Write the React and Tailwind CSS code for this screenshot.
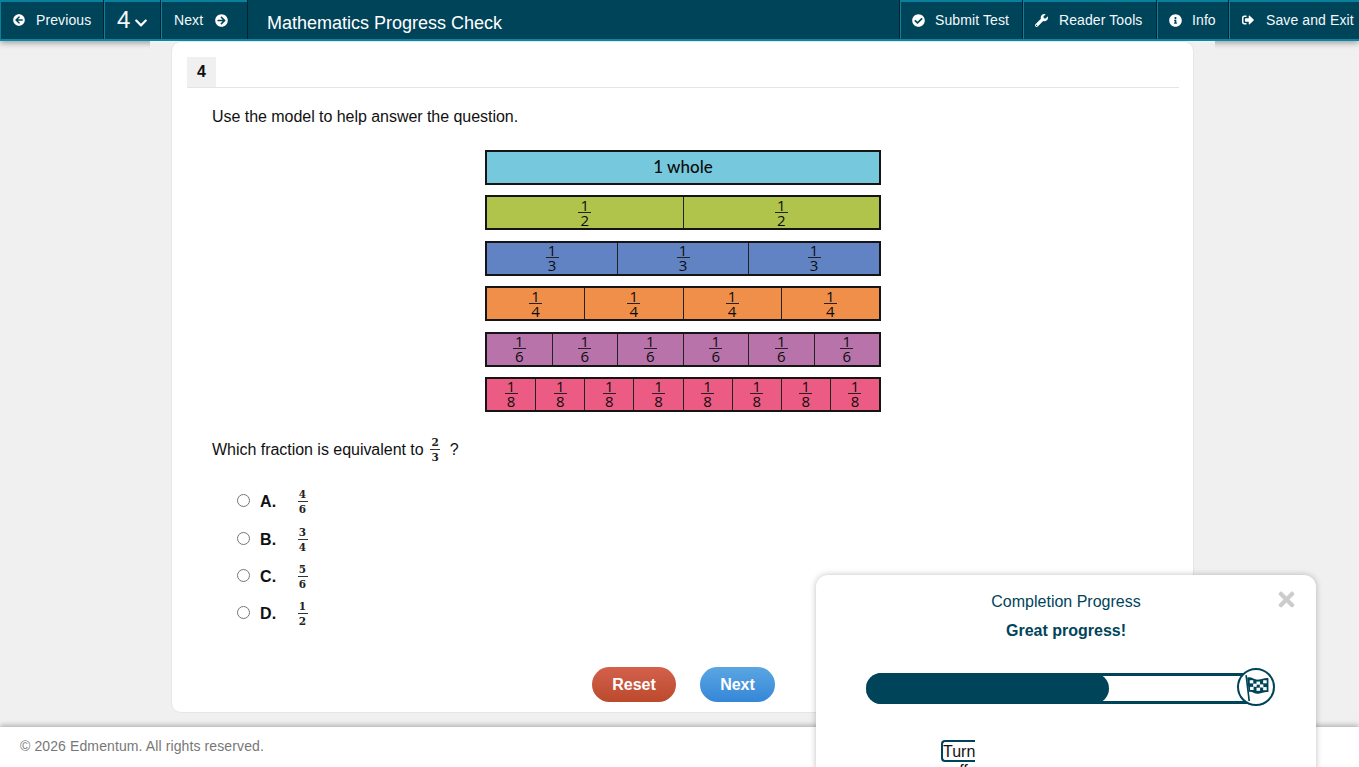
import React from "react";
import {
  FaArrowCircleLeft,
  FaArrowCircleRight,
  FaChevronDown,
  FaCheckCircle,
  FaWrench,
  FaInfoCircle,
  FaSignOutAlt,
  FaTimes,
} from "react-icons/fa";

const rows = [
  { bg: "bg-[#76c8dc]", n: 1, whole: true },
  { bg: "bg-[#b0c44c]", n: 2 },
  { bg: "bg-[#6283c3]", n: 3 },
  { bg: "bg-[#ef8f4a]", n: 4 },
  { bg: "bg-[#b873aa]", n: 6 },
  { bg: "bg-[#ec5b84]", n: 8 },
];

function NavBtn({ icon, children, className = "", after }) {
  return (
    <div
      className={`flex h-full items-center border-l border-[#00242f] pt-px text-[14px] tracking-[0.1px] text-[#f4f8fa] shadow-[inset_1px_0_0_#0a7f9e,inset_0_2px_0_#0a7f9e] ${className}`}
    >
      {icon}
      {children}
      {after}
    </div>
  );
}

function ModelFrac({ n }) {
  return (
    <div className="flex flex-col items-center font-['Open_Sans',sans-serif] text-[15px] font-medium leading-[14px] text-[#0c0c0c]">
      <span className="h-[14px]">1</span>
      <span className="h-px w-[13px] bg-[#222]" />
      <span className="h-[15px]">{n}</span>
    </div>
  );
}

function ModelRow({ bg, n, whole }) {
  return (
    <div className={`flex h-[35px] w-full border-2 border-[#151515] ${bg}`}>
      {whole ? (
        <div className="flex flex-1 items-center justify-center pb-[2px] font-['Lato',sans-serif] text-[17px] font-medium text-[#0c0c0c]">
          1 whole
        </div>
      ) : (
        Array.from({ length: n }).map((_, i) => (
          <div
            key={i}
            className="flex flex-1 items-center justify-center border-l border-[#222] first:border-l-0"
          >
            <ModelFrac n={n} />
          </div>
        ))
      )}
    </div>
  );
}

function MathFrac({ a, b, className = "" }) {
  return (
    <span
      className={`inline-flex flex-col items-center font-['DejaVu_Serif',serif] text-[10.5px] font-bold leading-[12px] text-[#222] ${className}`}
    >
      <span>{a}</span>
      <span className="my-px h-px w-[10px] bg-[#333]" />
      <span>{b}</span>
    </span>
  );
}

function Option({ letter, a, b }) {
  return (
    <div className="flex h-[37.3px] items-center">
      <span className="-mt-[2px] h-[13px] w-[13px] rounded-full border border-[#767676] bg-white" />
      <span className="ml-[10px] mt-px w-[37px] text-[16px] font-bold tracking-[0.2px] text-[#111]">{letter}</span>
      <MathFrac a={a} b={b} className="w-[11px]" />
    </div>
  );
}

function Flag() {
  return (
    <svg viewBox="0 0 26 26" className="h-[27px] w-[27px]" aria-hidden="true">
      <path d="M3 1 L6 26" stroke="#00445a" strokeWidth="1.6" fill="none" />
      <path d="M4 3.5 C8 2 11 6 15 5.4 C18 5 21 3.5 24.5 4 L24.5 17.5 C21 17 18 18.5 15 19 C11 19.8 8.5 16 5.6 17.5 Z" fill="#00445a" />
      <g fill="#ffffff">
        <rect x="6.5" y="6" width="3.4" height="3" />
        <rect x="13" y="7.3" width="3.4" height="3" />
        <rect x="19.4" y="6" width="3.4" height="3" />
        <rect x="9.8" y="9.3" width="3.4" height="3" />
        <rect x="16.2" y="10" width="3.4" height="3" />
        <rect x="6.8" y="12.4" width="3.4" height="3" />
        <rect x="13" y="13.2" width="3.4" height="3" />
        <rect x="19.4" y="12.6" width="3.4" height="3" />
      </g>
    </svg>
  );
}

export default function App() {
  return (
    <div className="relative flex h-[767px] w-[1359px] flex-col overflow-hidden bg-[#f0f0f0] font-['Liberation_Sans',Arial,sans-serif]">
      <header className="flex h-[41px] shrink-0 items-stretch justify-between border-b-2 border-[#0a86a6] bg-[#00445a] shadow-[0_2px_6px_rgba(0,0,0,0.35)]">
        <div className="flex h-full items-center">
          <NavBtn className="w-[103px] border-l-0 pl-[13px]" icon={<FaArrowCircleLeft className="mr-[11px] text-[12px] text-white" />}>
            Previous
          </NavBtn>
          <NavBtn className="w-[57px] pl-[13px]">
            <span className="text-[24px] leading-none">4</span>
            <FaChevronDown className="ml-[4px] mt-[6px] text-[14px] text-white" />
          </NavBtn>
          <NavBtn className="w-[87px] pl-[13px]" after={<FaArrowCircleRight className="ml-[12px] text-[13px] text-white" />}>
            Next
          </NavBtn>
          <div className="flex h-full items-center border-l border-[#00242f] pl-[19px] pt-[8px] text-[18px] text-white">
            Mathematics Progress Check
          </div>
        </div>
        <div className="flex h-full items-center">
          <NavBtn className="w-[123px] pl-[12px]" icon={<FaCheckCircle className="mr-[10px] text-[13px] text-white" />}>
            Submit Test
          </NavBtn>
          <NavBtn className="w-[134px] pl-[12px]" icon={<FaWrench className="mr-[11px] text-[13px] text-white" />}>
            Reader Tools
          </NavBtn>
          <NavBtn className="w-[72px] pl-[12px]" icon={<FaInfoCircle className="mr-[10px] text-[13px] text-white" />}>
            Info
          </NavBtn>
          <NavBtn className="w-[131px] whitespace-nowrap pl-[13px]" icon={<FaSignOutAlt className="mr-[12px] text-[12px] text-white" />}>
            Save and Exit
          </NavBtn>
        </div>
      </header>

      <main className="relative z-10 ml-[150px] h-[686px] w-[1065px] shrink-0 bg-[#f0f0f0] pl-[21px]">
        <section className="h-[672px] w-[1023px] rounded-[10px] border border-[#e6e6e6] bg-white pl-[15px] pr-[14px] pt-[15px]">
          <div className="border-b border-[#e5e5e5]">
            <div className="flex h-[30px] w-[29px] items-center justify-center bg-[#f0f0f0] text-[16px] font-bold text-[#111]">
              4
            </div>
          </div>
          <div className="pl-[25px] text-[16px] text-[#111]">
            <p className="mt-[19px] leading-[20px] tracking-[-0.04px]">Use the model to help answer the question.</p>
            <div className="ml-[273px] mt-[23px] flex w-[396px] flex-col gap-[10.4px]">
              {rows.map((r) => (
                <ModelRow key={r.n} {...r} />
              ))}
            </div>
            <div className="mt-[22px] flex h-[32px] items-center">
              <span className="tracking-[-0.03px]">Which fraction is equivalent to</span>
              <MathFrac a="2" b="3" className="ml-[6px] w-[11px]" />
              <span className="ml-[9px]">?</span>
            </div>
            <div className="ml-[25px] mt-[17.3px] flex flex-col">
              <Option letter="A." a="4" b="6" />
              <Option letter="B." a="3" b="4" />
              <Option letter="C." a="5" b="6" />
              <Option letter="D." a="1" b="2" />
            </div>
            <div className="ml-[380px] mt-[34.7px] flex gap-[24px] text-[16px] font-bold text-white [text-shadow:0_1px_2px_rgba(0,0,0,0.45)]">
              <button className="h-[35px] w-[84px] rounded-full bg-gradient-to-b from-[#d4604c] to-[#bb4a2c]">Reset</button>
              <button className="h-[35px] w-[75px] rounded-full bg-gradient-to-b from-[#5aa6e2] to-[#3586d8]">Next</button>
            </div>
          </div>
        </section>
      </main>

      <footer className="relative z-20 flex h-[40px] shrink-0 items-center bg-white pb-px pl-[20px] text-[14px] tracking-[0.11px] text-[#777] shadow-[0_-2px_5px_rgba(0,0,0,0.25)]">
        © 2026 Edmentum. All rights reserved.
      </footer>

      <aside className="absolute left-[816px] top-[575px] z-30 h-[260px] w-[500px] rounded-[12px] bg-white shadow-[0_0_6px_rgba(0,0,0,0.25)]">
        <FaTimes className="absolute right-[18px] top-[13px] text-[23px] text-[#cccccc]" />
        <div className="pt-[17px] text-center text-[16px] leading-[20px] text-[#00445a]">Completion Progress</div>
        <div className="mt-[9px] text-center text-[16px] font-bold leading-[20px] text-[#00445a]">Great progress!</div>
        <div className="relative ml-[50px] mt-[32px] h-[31px] w-[390px] rounded-l-full border-y-[3px] border-[#00445a] bg-white">
          <div className="absolute -top-[3px] left-0 h-[31px] w-[243px] rounded-full bg-[#00445a]" />
          <div className="absolute -top-[8px] left-[371px] flex h-[38px] w-[38px] items-center justify-center rounded-full border-2 border-[#00445a] bg-white">
            <Flag />
          </div>
        </div>
        <div className="ml-[125px] mt-[36px] h-[22px] w-[34px] rounded-l-[4px] border-y-[2px] border-l-[2px] border-[#00445a] text-[16px] leading-[19px] text-[#111]">
          <span className="block w-[32px] text-center">Turn off</span>
        </div>
      </aside>
    </div>
  );
}
